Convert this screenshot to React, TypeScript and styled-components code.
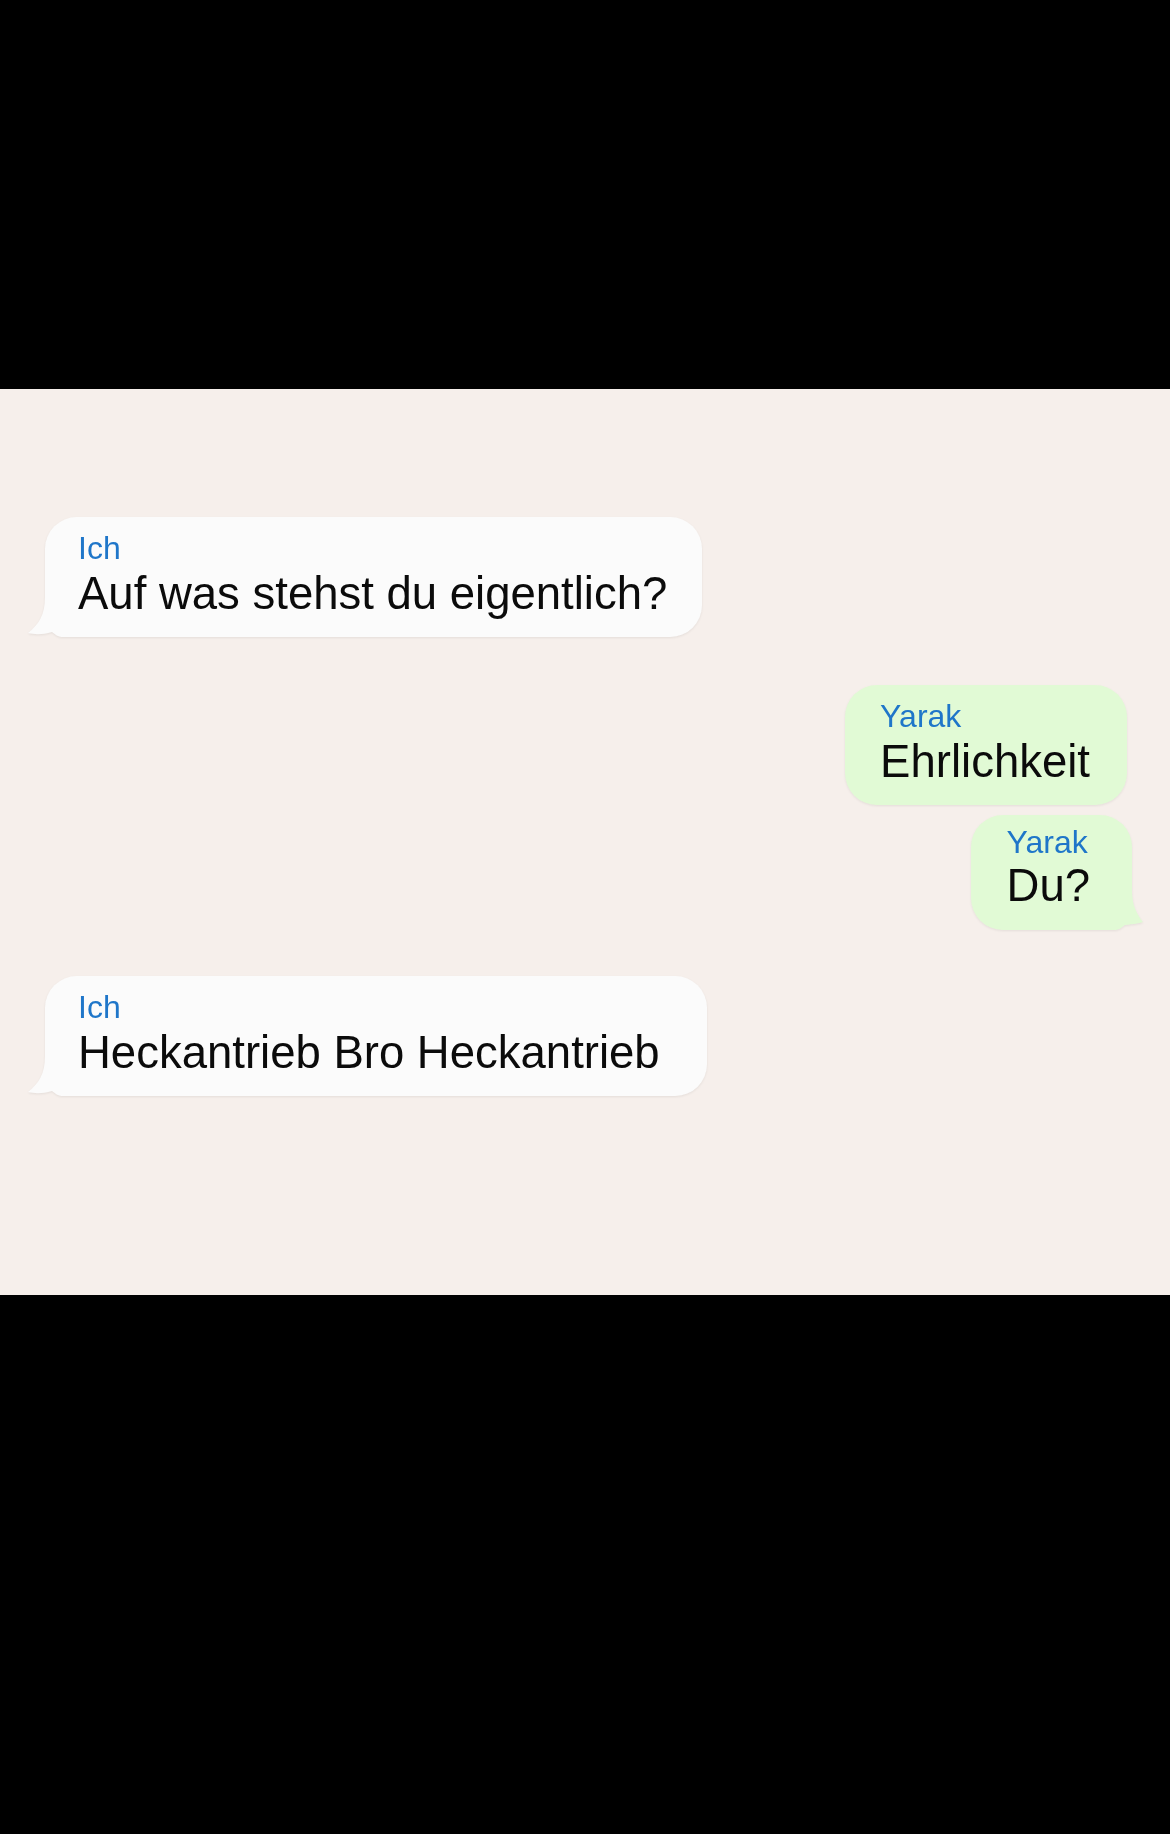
import React from "react";
import styled, { createGlobalStyle } from "styled-components";

const GlobalStyle = createGlobalStyle`
  html, body {
    margin: 0;
    padding: 0;
    background: #000;
  }
  body {
    font-family: "Liberation Sans", Arial, sans-serif;
  }
`;

const Screen = styled.div`
  width: 1170px;
  height: 1834px;
  display: flex;
  flex-direction: column;
  background: #000;
  overflow: hidden;
`;

const Letterbox = styled.div<{ $h?: number }>`
  background: #000;
  ${(p) => (p.$h ? `height: ${p.$h}px;` : "flex: 1;")}
  flex-shrink: 0;
`;

const Chat = styled.div`
  height: 906px;
  flex-shrink: 0;
  background: #f6efeb;
  display: flex;
  flex-direction: column;
  padding: 128px 0 0;
  box-sizing: border-box;
`;

const Row = styled.div<{ $side: "left" | "right"; $top: number; $inset: number }>`
  display: flex;
  justify-content: ${(p) => (p.$side === "left" ? "flex-start" : "flex-end")};
  margin-top: ${(p) => p.$top}px;
  padding-left: ${(p) => (p.$side === "left" ? p.$inset : 0)}px;
  padding-right: ${(p) => (p.$side === "right" ? p.$inset : 0)}px;
`;

const BubbleWrap = styled.div`
  position: relative;
  filter: drop-shadow(0 1px 1px rgba(0, 0, 0, 0.07));
`;

const Bubble = styled.div<{ $mine: boolean; $pad: [number, number, number, number] }>`
  position: relative;
  z-index: 1;
  background: ${(p) => (p.$mine ? "#e1fad5" : "#fbfbfb")};
  border-radius: 32px;
  padding: ${(p) => p.$pad.map((v) => `${v}px`).join(" ")};
  display: flex;
  flex-direction: column;
`;

const Name = styled.div<{ $gap: number }>`
  font-size: 32px;
  line-height: 36px;
  color: #1f76c9;
  margin-bottom: ${(p) => p.$gap}px;
  white-space: nowrap;
`;

const Text = styled.div`
  font-size: 45.5px;
  line-height: 50px;
  color: #0b0b0b;
  white-space: nowrap;
`;

const TailSvg = styled.svg<{ $side: "left" | "right"; $out: number }>`
  position: absolute;
  bottom: 0;
  width: ${(p) => p.$out + 33}px;
  height: 45px;
  z-index: 2;
  ${(p) =>
    p.$side === "left"
      ? `left: -${p.$out}px;`
      : `right: -${p.$out}px; transform: scaleX(-1);`}
`;

const Tail: React.FC<{ side: "left" | "right"; color: string; out: number; tipY: number }> = ({
  side,
  color,
  out,
  tipY,
}) => {
  const o = out;
  const w = o + 33;
  const d = `M${o} 0 L${w} 0 L${w} 45 L${o + 19} 45 C${o + 13} 45 ${o + 11} 43 ${o + 7} 40 C${o * 0.8} ${tipY + 2} ${o * 0.4} ${tipY + 1.5} 0 ${tipY} C${o * 0.6} ${tipY - 8} ${o} ${tipY - 18} ${o} 6 Z`;
  return (
    <TailSvg $side={side} $out={o} viewBox={`0 0 ${w} 45`}>
      <path d={d} fill={color} />
    </TailSvg>
  );
};

type Msg = {
  name: string;
  text: string;
  side: "left" | "right";
  top: number;
  inset: number;
  tail?: { out: number; tipY: number };
  pad: [number, number, number, number];
  gap: number;
};

const messages: Msg[] = [
  {
    name: "Ich",
    text: "Auf was stehst du eigentlich?",
    side: "left",
    top: 0,
    inset: 45,
    tail: { out: 17, tipY: 41 },
    pad: [13, 35, 18, 33],
    gap: 3,
  },
  {
    name: "Yarak",
    text: "Ehrlichkeit",
    side: "right",
    top: 48,
    inset: 43,
    pad: [13, 37, 18, 35],
    gap: 3,
  },
  {
    name: "Yarak",
    text: "Du?",
    side: "right",
    top: 10,
    inset: 38,
    tail: { out: 11, tipY: 37 },
    pad: [9, 42, 19, 36],
    gap: 1,
  },
  {
    name: "Ich",
    text: "Heckantrieb Bro Heckantrieb",
    side: "left",
    top: 46,
    inset: 45,
    tail: { out: 17, tipY: 41 },
    pad: [13, 47, 18, 33],
    gap: 3,
  },
];

export default function App() {
  return (
    <>
      <GlobalStyle />
      <Screen>
        <Letterbox $h={389} />
        <Chat>
          {messages.map((m, i) => {
            const mine = m.side === "right";
            const color = mine ? "#e1fad5" : "#fbfbfb";
            return (
              <Row key={i} $side={m.side} $top={m.top} $inset={m.inset}>
                <BubbleWrap>
                  {m.tail && <Tail side={m.side} color={color} out={m.tail.out} tipY={m.tail.tipY} />}
                  <Bubble $mine={mine} $pad={m.pad}>
                    <Name $gap={m.gap}>{m.name}</Name>
                    <Text>{m.text}</Text>
                  </Bubble>
                </BubbleWrap>
              </Row>
            );
          })}
        </Chat>
        <Letterbox />
      </Screen>
    </>
  );
}
